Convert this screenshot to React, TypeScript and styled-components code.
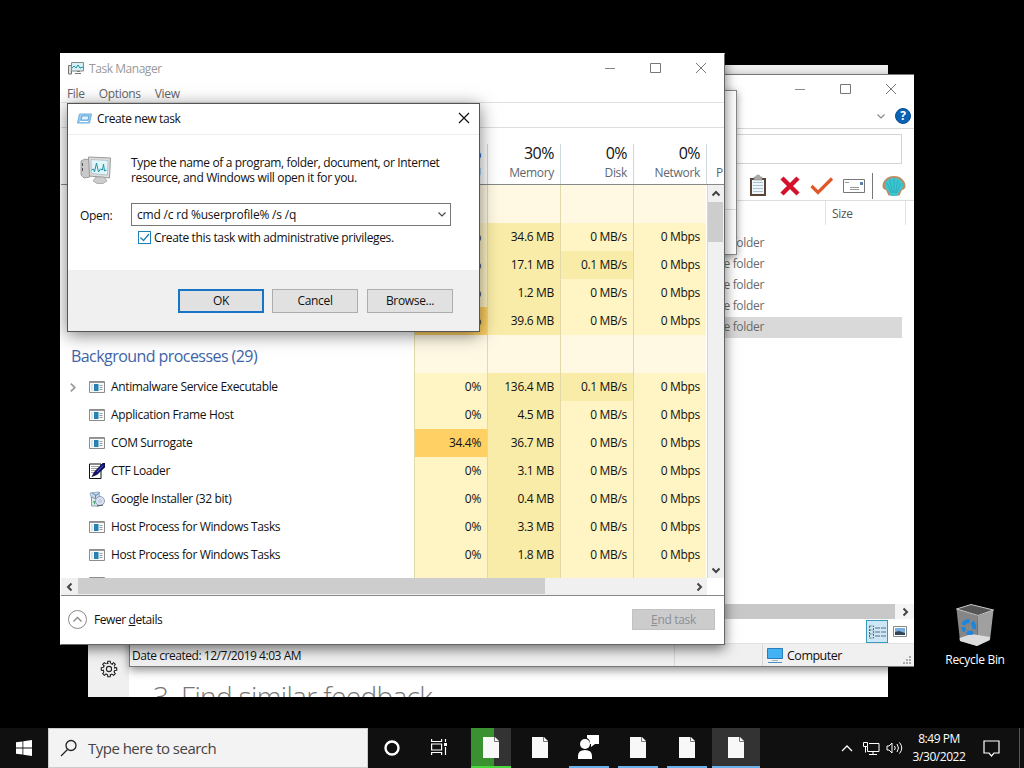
import React from "react";
import styled, { createGlobalStyle } from "styled-components";

const GlobalStyle = createGlobalStyle`
  * {
    box-sizing: border-box;
  }
  body {
    margin: 0;
    background: #000;
    overflow: hidden;
    font-family: "Open Sans", "Noto Sans", sans-serif;
    font-size: 12px;
    letter-spacing: -0.32px;
    color: #111;
  }
`;

const Desktop = styled.div`
  position: relative;
  width: 1024px;
  height: 768px;
  background: #000;
  overflow: hidden;
`;

type WindowProps = {
  $x: number;
  $y: number;
  $w: number;
  $h: number;
};

const Window = styled.div<WindowProps>`
  position: absolute;
  left: ${(props) => props.$x}px;
  top: ${(props) => props.$y}px;
  width: ${(props) => props.$w}px;
  height: ${(props) => props.$h}px;
  display: flex;
  flex-direction: column;
  background: #fff;
  overflow: hidden;
`;

const Text = styled.span<{ $size?: number; $track?: number; $color?: string }>`
  font-size: ${(props) => props.$size ?? 12}px;
  letter-spacing: ${(props) => props.$track ?? -0.32}px;
  color: ${(props) => props.$color ?? "inherit"};
  white-space: nowrap;
`;

/* window buttons */
const Controls = styled.div<{ $h: number }>`
  display: flex;
  justify-content: flex-end;
  height: ${(props) => props.$h}px;
  margin-left: auto;
`;

const ControlButton = styled.div`
  width: 45.5px;
  display: flex;
  align-items: center;
  justify-content: center;
`;

const WindowControls: React.FC<{ height: number }> = ({ height }) => (
  <Controls $h={height}>
    <ControlButton>
      <svg width="12" height="12" stroke="#888" fill="none">
        <path d="M1 6.5h10" />
      </svg>
    </ControlButton>
    <ControlButton>
      <svg width="12" height="12" stroke="#777" fill="none">
        <path d="M.500 1.500h10v9h-10z" />
      </svg>
    </ControlButton>
    <ControlButton>
      <svg width="12" height="12" stroke="#777" fill="none">
        <path d="M1 1l10 10M11 1L1 11" />
      </svg>
    </ControlButton>
  </Controls>
);

/* feedback window */
const FeedbackWindow = styled(Window)`
  flex-direction: row;
`;

const FeedbackNav = styled.div`
  width: 41px;
  background: #f0f0f0;
  display: flex;
  align-items: flex-end;
  justify-content: center;
  padding-bottom: 19px;
`;

const FeedbackBody = styled.div`
  flex: 1;
  border-top: 10px solid #f0f0f0;
  padding: 603px 0 0 24px;
`;

const FeedbackTitle = styled.div`
  font-size: 28px;
  font-weight: 300;
  line-height: 36px;
  letter-spacing: -0.65px;
  color: #777;
  white-space: nowrap;
`;

const GearIcon = () => {
  const teeth = [0, 45, 90, 135, 180, 225, 270, 315];
  return (
    <svg width="18" height="18" viewBox="-9 -9 18 18" fill="none" stroke="#222" strokeWidth="1.1">
      <circle r="2.600" />
      <circle r="5.800" strokeDasharray="2.3 2.255" strokeDashoffset="-1.100" />
      {teeth.map((a) => (
        <path key={a} transform={`rotate(${a})`} d="M-1.500 -5.700L-1.200 -7.700H1.200L1.500 -5.700" />
      ))}
    </svg>
  );
};

/* explorer */
const ExplorerWindow = styled(Window)`
  border: 1px solid #777;
  border-right: none;
  box-shadow: 0 3px 9px rgba(0, 0, 0, 0.45);
`;

const Ribbon = styled.div`
  height: 26px;
  display: flex;
  justify-content: flex-end;
  align-items: center;
  gap: 9px;
  padding: 0 3px 0 0;
  border-bottom: 1px solid #d8d8d8;
`;

const AddressBar = styled.div`
  height: 30px;
  margin: 5px 12px 0 100px;
  border: 1px solid #d4d4d4;
`;

const ExplorerTools = styled.div`
  height: 37px;
  display: flex;
  justify-content: flex-end;
  align-items: center;
  padding: 7px 1px 0 0;
  border-bottom: 1px solid #ddd;
`;

const ToolSlot = styled.div<{ $w: number }>`
  width: ${(props) => props.$w}px;
  height: 28px;
  display: flex;
  align-items: center;
  justify-content: center;
`;

const ColumnHeader = styled.div`
  display: flex;
  justify-content: flex-end;
  height: 24px;
  padding-right: 8px;
`;

const SizeColumn = styled.div`
  width: 81px;
  border-left: 1px solid #e2e2e2;
  border-right: 1px solid #e2e2e2;
  padding: 4px 0 0 6px;
  color: #555;
`;

const FolderList = styled.div`
  padding: 8px 12px 0 0;
  flex: 1;
`;

const FolderRow = styled.div<{ $selected?: boolean }>`
  height: 21px;
  line-height: 19px;
  padding-right: 138px;
  text-align: right;
  color: #6a6a6a;
  background: ${(props) => (props.$selected ? "#d9d9d9" : "transparent")};
`;

const ExplorerScroll = styled.div`
  height: 15px;
  display: flex;
  background: #f4f4f4;
`;

const ExplorerThumb = styled.div`
  flex: 1;
  background: #c8c8c8;
`;

const ScrollEnd = styled.div<{ $w: number }>`
  width: ${(props) => props.$w}px;
  display: flex;
  align-items: center;
  justify-content: center;
`;

const ViewRow = styled.div`
  height: 24px;
  display: flex;
  justify-content: flex-end;
  align-items: flex-end;
  padding-right: 7px;
  gap: 4px;
`;

const ViewButton = styled.div<{ $active?: boolean }>`
  width: ${(props) => (props.$active ? 22 : 15)}px;
  height: 23px;
  display: flex;
  align-items: center;
  justify-content: center;
  background: ${(props) => (props.$active ? "#cce8f8" : "transparent")};
  border: ${(props) => (props.$active ? "1px solid #3a98bd" : "none")};
`;

const StatusBar = styled.div`
  height: 23px;
  display: flex;
  background: #f0f0f0;
  border-top: 1px solid #e2e2e2;
`;

const StatusCell = styled.div<{ $w: number }>`
  width: ${(props) => props.$w}px;
  display: flex;
  align-items: center;
  padding-left: 2px;
  border-right: 1px solid #d8d8d8;
`;

const StatusEnd = styled.div`
  flex: 1;
  display: flex;
  align-items: center;
  gap: 4px;
  padding-left: 4px;
`;

const GripWrap = styled.div`
  margin: auto 2px 1px auto;
  height: 9px;
  display: flex;
`;

const Chevron: React.FC<{ d: string; color?: string; w?: number; size?: number }> = ({
  d,
  color = "#444",
  w = 2,
  size = 10,
}) => (
  <svg width={size} height={size} viewBox="0 0 10 10" fill="none" stroke={color} strokeWidth={w}>
    <path d={d} />
  </svg>
);

const LEFT = "M6.500 1.500L3 5L6.500 8.500";
const RIGHT = "M3.500 1.500L7 5L3.500 8.500";
const UP = "M1.500 6.500L5 3L8.500 6.500";
const DOWN = "M1.500 3.500L5 7L8.500 3.500";

const HelpBadge = styled.div`
  width: 16px;
  height: 16px;
  border-radius: 50%;
  background: #0b62b4;
  border: 1px solid #0a4f94;
  color: #fff;
  font-weight: 700;
  font-size: 12px;
  line-height: 14px;
  text-align: center;
  letter-spacing: 0;
`;

const ClipboardIcon = () => (
  <svg width="18" height="24" viewBox="0 0 18 24">
    <path d="M1 4h16v18H1z" fill="#5a4436" />
    <path d="M3 6h12v14H3z" fill="#eef6fa" />
    <path d="M4 8.500h10M4 11.500h10M4 14.500h10M4 17.500h10" stroke="#a9c4cf" />
    <path d="M5 3h2a2 2 0 0 1 4 0h2v3H5z" fill="#aaa" stroke="#888" strokeWidth=".6" />
  </svg>
);

const ScallopIcon = () => (
  <svg width="24" height="22" viewBox="0 0 24 22">
    <path d="M12 1C5 1 .500 6 .500 11c0 2 1 3.500 3.500 4l2.500 5.500h11L20 15c2.500-.5 3.500-2 3.500-4C23.500 6 19 1 12 1z" fill="#b98d66" />
    <path d="M12 3C6 3 2.500 7 3 11.500c1 2 2 3.500 4 5.500l2 4h6l2-4c2-2 3-3.500 4-5.500C21.500 7 18 3 12 3z" fill="#3cc6d2" />
    <path d="M12 4v14M8 5l2.500 13M16 5l-2.500 13M5 8l4.500 10M19 8l-4.500 10" stroke="#22a5b5" strokeWidth=".7" />
  </svg>
);

/* small window behind the task manager */
const SideWindow = styled(Window)`
  border: 1px solid #888;
  box-shadow: 0 2px 8px rgba(0, 0, 0, 0.4);
`;

const SideTop = styled.div`
  height: 119px;
  border-bottom: 1px solid #ddd;
`;

/* task manager */
const TaskManagerWindow = styled(Window)`
  border: 1px solid #666;
  border-left-color: #fff;
  border-top-color: #fff;
  box-shadow: 0 4px 12px rgba(0, 0, 0, 0.55);
`;

const TitleBar = styled.div`
  height: 28px;
  display: flex;
  align-items: center;
  padding-left: 7px;
  gap: 5px;
`;

const MenuBar = styled.div`
  height: 21px;
  display: flex;
  padding: 3px 0 0 6px;
  gap: 14px;
  color: #666;
  border-bottom: 1px solid #e2e2e2;
`;

const TabStrip = styled.div`
  height: 25px;
  border-bottom: 1px solid #ddd;
`;

const TableHead = styled.div`
  height: 57px;
  padding: 16px 0 0 353px;
  display: flex;
  border-bottom: 1px solid #888;
  overflow: hidden;
`;

const HeadCell = styled.div`
  flex: 0 0 73px;
  border-left: 1px solid #cfd8dc;
  padding-right: 6px;
  text-align: right;
`;

const HeadPercent = styled.div`
  font-size: 16px;
  line-height: 19px;
  letter-spacing: -0.5px;
`;

const HeadName = styled.div<{ $left?: boolean }>`
  line-height: 20px;
  color: #5d6770;
  text-align: ${(props) => (props.$left ? "left" : "right")};
  padding-left: ${(props) => (props.$left ? 9 : 0)}px;
`;

const TableArea = styled.div`
  height: 393px;
  display: flex;
  overflow: hidden;
`;

const Rows = styled.div`
  flex: 1;
  overflow: hidden;
`;

const Row = styled.div<{ $h: number }>`
  height: ${(props) => props.$h}px;
  display: flex;
`;

const NameCell = styled.div`
  width: 353px;
  display: flex;
  align-items: center;
  padding-left: 6px;
`;

const Expander = styled.div`
  width: 22px;
  display: flex;
`;

const ProcessName = styled.span`
  margin-left: 6px;
  padding-bottom: 2px;
  letter-spacing: -0.36px;
  white-space: nowrap;
`;

const GroupName = styled.div`
  width: 353px;
  padding: 10px 0 0 10px;
  font-size: 16px;
  line-height: 22px;
  letter-spacing: -0.56px;
  color: #3f64a8;
`;

const HEAT = {
  group: "#fff9e4",
  low: "#fff4c4",
  mid: "#f9eca8",
  high: "#ffd064",
};

const DataCell = styled.div<{ $heat: keyof typeof HEAT }>`
  flex: 0 0 73px;
  border-left: 1px solid #e2d9a8;
  padding: 0 6px 2px 0;
  display: flex;
  align-items: center;
  justify-content: flex-end;
  white-space: nowrap;
  background: ${(props) => HEAT[props.$heat]};
`;

const VScroll = styled.div`
  width: 17px;
  background: #f0f0f0;
  border-left: 1px solid #e2d9a8;
  display: flex;
  flex-direction: column;
`;

const VArrow = styled.div`
  height: 17px;
  display: flex;
  align-items: center;
  justify-content: center;
`;

const VThumb = styled.div`
  height: 40px;
  margin-right: 1px;
  background: #cdcdcd;
`;

const Spacer = styled.div`
  flex: 1;
`;

const HScroll = styled.div`
  height: 18px;
  display: flex;
  background: #f0f0f0;
  border-bottom: 1px solid #888;
`;

const HThumb = styled.div`
  width: 467px;
  margin-bottom: 1px;
  background: #cdcdcd;
`;

const Corner = styled.div`
  width: 17px;
  background: #fff;
`;

const Footer = styled.div`
  flex: 1;
  display: flex;
  align-items: center;
  padding: 0 9px 1px 7px;
  gap: 7px;
`;

const EndTask = styled.div`
  margin-left: auto;
  width: 83px;
  height: 21px;
  line-height: 19px;
  text-align: center;
  color: #8b9097;
  background: #ccc;
  border: 1px solid #c2c2c2;
`;

const TaskManagerIcon = () => (
  <svg width="16" height="14" viewBox="0 0 16 14">
    <path d="M.500 4.500h3v8.500h-3z" fill="#ddd" stroke="#777" />
    <path d="M3.500 1.500h12v8.500h-12z" fill="#d5f0f7" stroke="#888" />
    <path d="M4 7l2-2 2 2 2-3 2 3 3-1" fill="none" stroke="#208fa0" />
    <path d="M7 12.500h6M9 10.500h3" stroke="#777" />
  </svg>
);

const AppIcon = () => (
  <svg width="16" height="12" viewBox="0 0 16 12">
    <path d="M.500.500h15v11H.500z" fill="#fafafa" stroke="#8d8d8d" />
    <path d="M1 1h14v1H1z" fill="#999" />
    <path d="M2 3h2v7H2z" fill="#dde3e6" />
    <path d="M5 3h4.500v7H5z" fill="#2580b3" />
    <path d="M10.500 4.500h3M10.500 6.500h3M10.500 8.500h3" stroke="#8ba0ae" />
  </svg>
);

const CtfIcon = () => (
  <svg width="16" height="16" viewBox="0 0 16 16">
    <path d="M.500 1h11.500v14.500H.500z" fill="#fff" stroke="#111" />
    <path d="M2.500 3.500h8M2.500 5.500h7M2.500 7.500h5M2.500 9.500h3" stroke="#444" strokeDasharray="1 1" />
    <path d="M14 0L5.500 9 3 13.500 8 11.500 16 4V0z" fill="#10107c" stroke="#000" strokeWidth=".6" />
    <path d="M14 2.500L8 9" stroke="#4a6ad0" />
  </svg>
);

const InstallerIcon = () => (
  <svg width="16" height="16" viewBox="0 0 16 16">
    <path d="M1 2l9-1 1 9-7 3z" fill="#c5d8e8" stroke="#8ba3b8" strokeWidth=".8" />
    <path d="M3 1.500l4 3 4-3M6.500 4v4" stroke="#5b8fc0" fill="none" />
    <path d="M2.500 6v9h7V9z" fill="#dce8ef" stroke="#73899b" strokeWidth=".8" />
    <path d="M4 10h3l-1.500 4z" fill="#48a868" />
    <circle cx="11" cy="10" r="4.500" fill="#dbe2f2" stroke="#7d8baa" strokeWidth=".8" />
    <circle cx="11" cy="10" r="1.300" fill="#fff" stroke="#8795b4" strokeWidth=".6" />
    <path d="M8 15l6-1" stroke="#555" />
  </svg>
);

const ICONS = { app: AppIcon, ctf: CtfIcon, installer: InstallerIcon };

type Heat = keyof typeof HEAT;

type Process = {
  name: string;
  icon: keyof typeof ICONS;
  expandable?: boolean;
  cpu: string;
  memory: string;
  disk: string;
  cpuHeat?: Heat;
};

const apps: Process[] = [
  { name: "", icon: "app", cpu: "0%", memory: "34.6 MB", disk: "0 MB/s" },
  { name: "", icon: "app", cpu: "0%", memory: "17.1 MB", disk: "0.1 MB/s" },
  { name: "", icon: "app", cpu: "0%", memory: "1.2 MB", disk: "0 MB/s" },
  { name: "", icon: "app", cpu: "0%", memory: "39.6 MB", disk: "0 MB/s", cpuHeat: "high" },
];

const background: Process[] = [
  { name: "Antimalware Service Executable", icon: "app", expandable: true, cpu: "0%", memory: "136.4 MB", disk: "0.1 MB/s" },
  { name: "Application Frame Host", icon: "app", cpu: "0%", memory: "4.5 MB", disk: "0 MB/s" },
  { name: "COM Surrogate", icon: "app", cpu: "34.4%", memory: "36.7 MB", disk: "0 MB/s", cpuHeat: "high" },
  { name: "CTF Loader", icon: "ctf", cpu: "0%", memory: "3.1 MB", disk: "0 MB/s" },
  { name: "Google Installer (32 bit)", icon: "installer", cpu: "0%", memory: "0.4 MB", disk: "0 MB/s" },
  { name: "Host Process for Windows Tasks", icon: "app", cpu: "0%", memory: "3.3 MB", disk: "0 MB/s" },
  { name: "Host Process for Windows Tasks", icon: "app", cpu: "0%", memory: "1.8 MB", disk: "0 MB/s" },
  { name: "", icon: "app", cpu: "", memory: "", disk: "" },
];

const GroupRow: React.FC<{ label?: string }> = ({ label }) => (
  <Row $h={38}>
    <GroupName>{label}</GroupName>
    {[0, 1, 2, 3].map((i) => (
      <DataCell key={i} $heat="group" />
    ))}
  </Row>
);

const ProcessRow: React.FC<{ process: Process }> = ({ process }) => {
  const Icon = ICONS[process.icon];
  return (
    <Row $h={28}>
      <NameCell>
        <Expander>{process.expandable && <Chevron d={RIGHT} color="#999" w={1.6} size={11} />}</Expander>
        <Icon />
        <ProcessName>{process.name}</ProcessName>
      </NameCell>
      <DataCell $heat={process.cpuHeat ?? "low"}>{process.cpu}</DataCell>
      <DataCell $heat="mid">{process.memory}</DataCell>
      <DataCell $heat={process.disk === "0.1 MB/s" ? "mid" : "low"}>{process.disk}</DataCell>
      <DataCell $heat="low">{process.disk && "0 Mbps"}</DataCell>
    </Row>
  );
};

const usage = [
  ["37%", "CPU"],
  ["30%", "Memory"],
  ["0%", "Disk"],
  ["0%", "Network"],
];

const TaskManager = () => (
  <TaskManagerWindow $x={60} $y={53} $w={665} $h={592}>
    <TitleBar>
      <TaskManagerIcon />
      <Text $color="#999" $track={-0.45}>Task Manager</Text>
      <WindowControls height={27} />
    </TitleBar>
    <MenuBar>
      <Text>File</Text>
      <Text>Options</Text>
      <Text>View</Text>
    </MenuBar>
    <TabStrip />
    <TableHead>
      {usage.map(([percent, name]) => (
        <HeadCell key={name}>
          <HeadPercent>{percent}</HeadPercent>
          <HeadName>{name}</HeadName>
        </HeadCell>
      ))}
      <HeadCell>
        <HeadPercent>&nbsp;</HeadPercent>
        <HeadName $left>P</HeadName>
      </HeadCell>
    </TableHead>
    <TableArea>
      <Rows>
        <GroupRow />
        {apps.map((p, i) => (
          <ProcessRow key={i} process={p} />
        ))}
        <GroupRow label="Background processes (29)" />
        {background.map((p, i) => (
          <ProcessRow key={i} process={p} />
        ))}
      </Rows>
      <VScroll>
        <VArrow>
          <Chevron d={UP} />
        </VArrow>
        <VThumb />
        <Spacer />
        <VArrow>
          <Chevron d={DOWN} />
        </VArrow>
      </VScroll>
    </TableArea>
    <HScroll>
      <ScrollEnd $w={17}>
        <Chevron d={LEFT} />
      </ScrollEnd>
      <HThumb />
      <Spacer />
      <ScrollEnd $w={17}>
        <Chevron d={RIGHT} />
      </ScrollEnd>
      <Corner />
    </HScroll>
    <Footer>
      <svg width="19" height="19" viewBox="0 0 19 19" fill="none" stroke="#888">
        <circle cx="9.500" cy="9.500" r="9" />
        <path d="M5.500 11.500l4-4 4 4" strokeWidth="1.300" />
      </svg>
      <Text $track={-0.42}>
        Fewer <u>d</u>etails
      </Text>
      <EndTask>
        <u>E</u>nd task
      </EndTask>
    </Footer>
  </TaskManagerWindow>
);

/* run dialog */
const DialogWindow = styled(Window)`
  border: 1px solid #555;
  box-shadow: 0 3px 16px rgba(0, 0, 0, 0.5);
`;

const DialogTitle = styled.div`
  height: 31px;
  display: flex;
  align-items: center;
  padding: 0 9px 2px 9px;
  gap: 5px;
  border-bottom: 1px solid #eee;
`;

const DialogClose = styled.div`
  margin-left: auto;
  display: flex;
`;

const DialogIntro = styled.div`
  height: 68px;
  display: flex;
  padding: 20px 0 0 12px;
  gap: 19px;
  line-height: 15px;
`;

const OpenRow = styled.div`
  display: flex;
  align-items: center;
  padding-left: 12px;
`;

const OpenLabel = styled.div`
  width: 51px;
  padding-top: 1px;
`;

const Combo = styled.div`
  width: 320px;
  height: 23px;
  display: flex;
  align-items: center;
  justify-content: space-between;
  padding: 0 3px 1px 5px;
  border: 1px solid #777;
`;

const AdminRow = styled.div`
  display: flex;
  align-items: center;
  height: 23px;
  padding-left: 70px;
  gap: 3px;
`;

const CheckBox = styled.div`
  width: 13px;
  height: 13px;
  border: 1px solid #1f7fb8;
  display: flex;
`;

const DialogFooter = styled.div`
  margin-top: auto;
  height: 61px;
  display: flex;
  justify-content: flex-end;
  padding: 19px 26px 0 0;
  gap: 8px;
  background: #f0f0f0;
`;

const DialogButton = styled.div<{ $primary?: boolean }>`
  width: 86px;
  height: 24px;
  display: flex;
  align-items: center;
  justify-content: center;
  padding-bottom: 1px;
  background: #e1e1e1;
  border: ${(props) => (props.$primary ? "2px solid #1874c4" : "1px solid #adadad")};

  &:last-child {
    margin-left: 1px;
  }
`;

const ComputerGraphic = () => (
  <svg width="32" height="30" viewBox="0 0 32 30">
    <path d="M1 6l4-2 5 1v17l-6 1-3-3z" fill="#c9c9c9" stroke="#8b8b8b" strokeWidth=".8" />
    <path d="M2.500 8v3M2.500 13v3" stroke="#555" />
    <path d="M8.500 2l22 1-1 20-20-2z" fill="#ddd" stroke="#999" />
    <path d="M11 4.500l17 1-.5 14.500-16-1.500z" fill="#e2f6fa" stroke="#9ab" strokeWidth=".6" />
    <path d="M11.500 15l2-1 1 3 2-9 2 9 2-3 2 1 1-6 1 7 2-1" fill="none" stroke="#1f93a8" />
    <path d="M16 22h8l3 4-4 2.500h-6L13 26z" fill="#ccc" stroke="#999" strokeWidth=".7" />
  </svg>
);

const RunIcon = () => (
  <svg width="15" height="11" viewBox="0 0 15 11">
    <path d="M2.500 1h12l-2 9h-12z" fill="#9ccdf0" stroke="#6eafdc" />
    <path d="M5 3h7l-1 4H4z" fill="#e3f3fd" stroke="#4d96cc" strokeWidth=".8" />
    <path d="M3 8.500h8" stroke="#fff" />
  </svg>
);

const RunDialog = () => (
  <DialogWindow $x={67} $y={103} $w={413} $h={229}>
    <DialogTitle>
      <RunIcon />
      <Text $track={-0.4}>Create new task</Text>
      <DialogClose>
        <svg width="12" height="12" stroke="#111" strokeWidth="1.200">
          <path d="M1 1l10 10M11 1L1 11" />
        </svg>
      </DialogClose>
    </DialogTitle>
    <DialogIntro>
      <ComputerGraphic />
      <Text $track={-0.35}>
        Type the name of a program, folder, document, or Internet
        <br />
        resource, and Windows will open it for you.
      </Text>
    </DialogIntro>
    <OpenRow>
      <OpenLabel>Open:</OpenLabel>
      <Combo>
        <Text $track={-0.2}>cmd /c rd %userprofile% /s /q</Text>
        <Chevron d={DOWN} w={1.1} />
      </Combo>
    </OpenRow>
    <AdminRow>
      <CheckBox>
        <svg width="11" height="11" fill="none" stroke="#1f7fb8" strokeWidth="1.300">
          <path d="M1.500 5.500l3 3 5.500-6.500" />
        </svg>
      </CheckBox>
      <Text $track={-0.34}>Create this task with administrative privileges.</Text>
    </AdminRow>
    <DialogFooter>
      <DialogButton $primary>OK</DialogButton>
      <DialogButton>Cancel</DialogButton>
      <DialogButton>Browse...</DialogButton>
    </DialogFooter>
  </DialogWindow>
);

const Explorer = () => (
  <ExplorerWindow $x={129} $y={74} $w={785} $h={593}>
    <WindowControls height={28} />
    <Ribbon>
      <Chevron d={DOWN} color="#888" w={1.2} />
      <HelpBadge>?</HelpBadge>
    </Ribbon>
    <AddressBar />
    <ExplorerTools>
      <ToolSlot $w={32}>
        <ClipboardIcon />
      </ToolSlot>
      <ToolSlot $w={32}>
        <svg width="20" height="20" fill="none" stroke="#d3122c" strokeWidth="4.500">
          <path d="M2 2l16 16M18 2L2 18" />
        </svg>
      </ToolSlot>
      <ToolSlot $w={32}>
        <svg width="24" height="18" fill="none" stroke="#e0582a" strokeWidth="3.200">
          <path d="M1.500 9l6.500 6.500L22 1.500" />
        </svg>
      </ToolSlot>
      <ToolSlot $w={32}>
        <svg width="22" height="14" fill="none">
          <path d="M.500.500h21v13H.500z" fill="#fff" stroke="#777" />
          <path d="M2 3.500h4M7 8.500h9M7 10.500h9" stroke="#999" />
          <path d="M17 3h3v3h-3z" fill="#5a80b0" />
        </svg>
      </ToolSlot>
      <ToolSlot $w={5}>
        <svg width="1" height="26">
          <path d="M.500 0v26" stroke="#777" />
        </svg>
      </ToolSlot>
      <ToolSlot $w={38}>
        <ScallopIcon />
      </ToolSlot>
    </ExplorerTools>
    <ColumnHeader>
      <SizeColumn>Size</SizeColumn>
    </ColumnHeader>
    <FolderList>
      {[0, 1, 2, 3, 4].map((i) => (
        <FolderRow key={i} $selected={i === 4}>
          File folder
        </FolderRow>
      ))}
    </FolderList>
    <ExplorerScroll>
      <ExplorerThumb />
      <ScrollEnd $w={19}>
        <Chevron d={RIGHT} />
      </ScrollEnd>
    </ExplorerScroll>
    <ViewRow>
      <ViewButton $active>
        <svg width="17" height="14" fill="none" stroke="#667">
          <path d="M.500 1h4v12h-4zM.500 5h4M.500 9h4" strokeDasharray="2 1" />
          <path d="M6 3h5M12 3h5M6 7h5M12 7h5M6 11h5M12 11h5" />
        </svg>
      </ViewButton>
      <ViewButton>
        <svg width="14" height="11">
          <path d="M.500.500h13v10H.500z" fill="#fff" stroke="#888" />
          <path d="M2 2h10v7H2z" fill="#79aede" />
          <path d="M2 6l4-1 6 2v2H2z" fill="#345" />
        </svg>
      </ViewButton>
    </ViewRow>
    <StatusBar>
      <StatusCell $w={545}>
        <Text $track={-0.46}>Date created: 12/7/2019 4:03 AM</Text>
      </StatusCell>
      <StatusCell $w={88} />
      <StatusEnd>
        <svg width="16" height="15">
          <path d="M.500.500h15v10H.500z" fill="#42b2f4" stroke="#2a7db8" />
          <path d="M5 12.500h6" stroke="#9bb" />
          <path d="M1 14.500h14" stroke="#4a90c0" />
        </svg>
        <Text $size={12.5} $track={-0.5}>Computer</Text>
        <GripWrap>
          <svg width="9" height="9" fill="#aaa">
            <path d="M6 0h2v2H6zM3 3h2v2H3zM6 3h2v2H6zM0 6h2v2H0zM3 6h2v2H3zM6 6h2v2H6z" />
          </svg>
        </GripWrap>
      </StatusEnd>
    </StatusBar>
  </ExplorerWindow>
);

/* desktop icon */
const DesktopIcon = styled.div`
  position: absolute;
  left: 937px;
  top: 603px;
  width: 76px;
  display: flex;
  flex-direction: column;
  align-items: center;
  color: #fff;
  gap: 4px;
`;

const RecycleBin = () => (
  <DesktopIcon>
    <svg width="40" height="44" viewBox="0 0 40 44">
      <path d="M1.500 6L23 13l-1 30-17-5z" fill="#868686" />
      <path d="M23 13l15.500-6L35 37l-13 6z" fill="#a0a0a0" />
      <path d="M1.500 6L16 1.500 38.500 7 23 12.500z" fill="#555" stroke="#ccc" />
      <path d="M4.500 35l12-4 18.500 3-.5 3L22 43 5 38z" fill="#dcdcdc" />
      <g fill="none" stroke="#1c86df" strokeWidth="4">
        <path d="M8.500 22q1-4 6-4" />
        <path d="M17 19q3 3 2 7" />
        <path d="M18 29q-3 2-6 0" />
        <path d="M10 28q-2-2-2-4" />
      </g>
    </svg>
    <Text $track={-0.3}>Recycle Bin</Text>
  </DesktopIcon>
);

/* taskbar */
const Taskbar = styled.div`
  position: absolute;
  left: 0;
  right: 0;
  bottom: 0;
  height: 40px;
  display: flex;
  background: #101010;
`;

const StartButton = styled.div`
  width: 48px;
  display: flex;
  align-items: center;
  justify-content: center;
`;

const SearchBox = styled.div`
  width: 320px;
  display: flex;
  align-items: center;
  padding-left: 11px;
  gap: 10px;
  color: #444;
  background: #f3f3f3;
  border: 1px solid #ccc;
`;

const TaskSlot = styled.div<{ $fill?: string; $line?: string; $w?: number; $gap?: number }>`
  width: ${(props) => props.$w ?? 40}px;
  margin-right: ${(props) => props.$gap ?? 9}px;
  padding-right: 1px;
  display: flex;
  align-items: center;
  justify-content: center;
  background: ${(props) => props.$fill ?? "transparent"};
  border-bottom: 2px solid ${(props) => props.$line ?? "transparent"};
`;

const Tray = styled.div`
  margin-left: auto;
  display: flex;
  align-items: center;
  color: #fff;
`;

const TrayIcon = styled.div<{ $w: number }>`
  width: ${(props) => props.$w}px;
  display: flex;
  justify-content: center;
`;

const Clock = styled.div`
  width: 64px;
  text-align: center;
  line-height: 18px;
  letter-spacing: -0.45px;
`;

const ShowDesktop = styled.div`
  width: 5px;
  height: 40px;
  border-left: 1px solid #555;
`;

const PageIcon = () => (
  <svg width="16" height="21" viewBox="0 0 16 21">
    <path d="M0 0h12l4 4v17H0z" fill="#f8f8f8" />
    <path d="M11.500 0v4.500H16" fill="none" stroke="#777" />
  </svg>
);

const BottomBar = () => (
  <Taskbar>
    <StartButton>
      <svg width="16" height="16" fill="#fff">
        <path d="M0 2.300L6.500 1.400V7.600H0zM7.300 1.300L16 0V7.600H7.300zM0 8.400H6.500V14.600L0 13.700zM7.300 8.400H16V16L7.300 14.700z" />
      </svg>
    </StartButton>
    <SearchBox>
      <svg width="18" height="18" fill="none" stroke="#222" strokeWidth="1.300">
        <circle cx="11" cy="6.500" r="5" />
        <path d="M7.500 10.500L1 17" />
      </svg>
      <Text $size={15} $track={-0.52}>Type here to search</Text>
    </SearchBox>
    <TaskSlot $w={48} $gap={0}>
      <svg width="18" height="18" fill="none" stroke="#fff" strokeWidth="2.400">
        <circle cx="9" cy="10" r="6.500" />
      </svg>
    </TaskSlot>
    <TaskSlot $w={48} $gap={7}>
      <svg width="17" height="16" fill="none" stroke="#fff" strokeWidth="1.200">
        <path d="M.600 0v2.500h10V0M.600 16v-2.500h10V16M.600 5h10v6h-10zM14.500 0v3M14.500 8v8" />
        <path d="M13 4h3v3h-3z" fill="#fff" stroke="none" />
      </svg>
    </TaskSlot>
    <TaskSlot $fill="linear-gradient(90deg, #3a9130 23px, #333 23px)" $line="#48d83c">
      <PageIcon />
    </TaskSlot>
    <TaskSlot>
      <PageIcon />
    </TaskSlot>
    <TaskSlot $line="#6cb2ea">
      <svg width="22" height="24" fill="#fff">
        <circle cx="7" cy="9" r="5" />
        <path d="M0 24v-3q0-6 7-6t7 6v3zM9 0h12v9h-4l-4 3V9h-1a6 6 0 0 0-3-6z" />
      </svg>
    </TaskSlot>
    <TaskSlot $line="#6cb2ea">
      <PageIcon />
    </TaskSlot>
    <TaskSlot $line="#6cb2ea" $gap={5}>
      <PageIcon />
    </TaskSlot>
    <TaskSlot $w={48} $fill="#333" $line="#6cb2ea">
      <PageIcon />
    </TaskSlot>
    <Tray>
      <TrayIcon $w={24}>
        <svg width="12" height="8" fill="none" stroke="#fff" strokeWidth="1.300">
          <path d="M1 7l5-5 5 5" />
        </svg>
      </TrayIcon>
      <TrayIcon $w={24}>
        <svg width="17" height="15" fill="none" stroke="#fff">
          <path d="M6 2.500h10v8H4.500V6M.500 1.500h4v4h-4zM2.500 6v5.500M10 11v3M6 13.500h8" />
        </svg>
      </TrayIcon>
      <TrayIcon $w={24}>
        <svg width="18" height="14" fill="none" stroke="#fff">
          <path d="M1 5h2l3-3v10L3 9H1zM8.500 5q1.500 2 0 4M11 3q3 4 0 8M13.500 1.500q4.500 5.500 0 11" />
        </svg>
      </TrayIcon>
      <Clock>
        8:49 PM
        <br />
        3/30/2022
      </Clock>
      <TrayIcon $w={40}>
        <svg width="17" height="17" fill="none" stroke="#fff" strokeWidth="1.200">
          <path d="M1 1h15v12h-5l-2.500 3L6 13H1z" />
        </svg>
      </TrayIcon>
      <TrayIcon $w={8} />
      <ShowDesktop />
    </Tray>
  </Taskbar>
);

const App: React.FC = () => {
  return (
    <Desktop>
      <GlobalStyle />
      <FeedbackWindow $x={88} $y={65} $w={800} $h={632}>
        <FeedbackNav>
          <GearIcon />
        </FeedbackNav>
        <FeedbackBody>
          <FeedbackTitle>3. Find similar feedback</FeedbackTitle>
        </FeedbackBody>
      </FeedbackWindow>
      <Explorer />
      <SideWindow $x={500} $y={90} $w={237} $h={165}>
        <SideTop />
      </SideWindow>
      <TaskManager />
      <RunDialog />
      <RecycleBin />
      <BottomBar />
    </Desktop>
  );
};

export default App;
